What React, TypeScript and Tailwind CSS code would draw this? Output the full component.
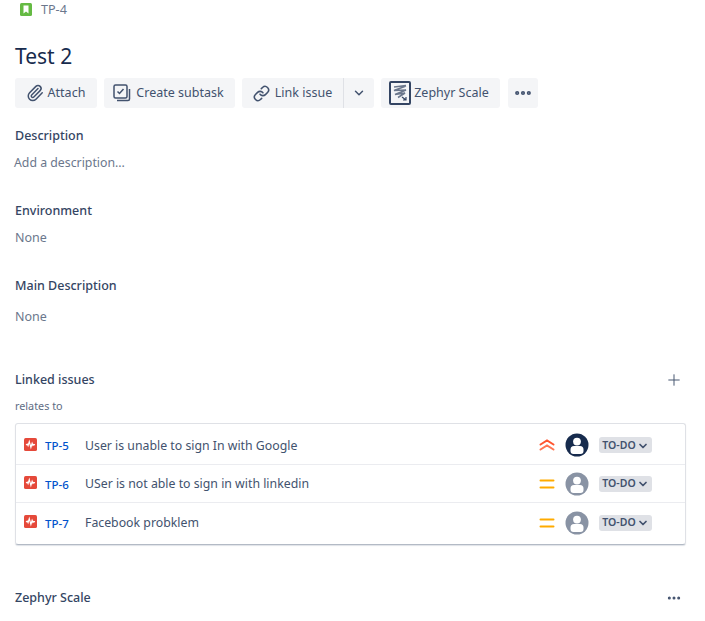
import { Paperclip, Link, ChevronDown, Ellipsis, Plus } from 'lucide-react';

const font = { fontFamily: '"Noto Sans", sans-serif' };

const Bug = () => (
  <svg width="13" height="13" viewBox="0 0 16 16" className="shrink-0 -mt-[2px]">
    <rect width="16" height="16" rx="2" fill="#e5493a" />
    <path d="M2.500 8.500l1.500-1 1 2 1.500-5 2 7 1.500-5 1 2.500 1-1 1.500.500" fill="none" stroke="#fff" strokeWidth="1.500" />
  </svg>
);

const Avatar = ({ color }: { color: string }) => (
  <svg width="24" height="24" viewBox="0 0 24 24" className="shrink-0">
    <circle cx="12" cy="12" r="11.500" fill={color} />
    <circle cx="12" cy="8.600" r="3.900" fill="#fff" />
    <path d="M5.500 16.500a3.500 3.500 0 0 1 3.500-3.500h6a3.500 3.500 0 0 1 3.500 3.500v1.500a3 3 0 0 1-3 3h-7a3 3 0 0 1-3-3z" fill="#fff" />
  </svg>
);

const High = () => (
  <svg width="16" height="14" viewBox="0 0 16 14" className="shrink-0">
    <path d="M1.500 6.500 8 2.500l6.500 4" fill="none" stroke="#ff5630" strokeWidth="2" strokeLinecap="round" />
    <path d="M1.500 11.500 8 7.500l6.500 4" fill="none" stroke="#ff7452" strokeWidth="2" strokeLinecap="round" />
  </svg>
);

const Medium = () => (
  <svg width="16" height="14" viewBox="0 0 16 14" className="shrink-0">
    <path d="M1.500 3.500h13M1.500 10.500h13" fill="none" stroke="#ffab00" strokeWidth="2" strokeLinecap="round" />
  </svg>
);

const Subtask = () => (
  <svg width="18" height="18" viewBox="0 0 18 18" fill="none" stroke="#42526e" className="shrink-0">
    <rect x="1" y="1" width="13" height="13" rx="1.500" strokeWidth="1.500" />
    <path d="m4.500 7.500 2 2 4-4.500" strokeWidth="1.500" />
    <path d="M4 16.500h11a1.500 1.500 0 0 0 1.500-1.500V5" strokeWidth="1.500" />
  </svg>
);

const Zephyr = () => (
  <svg width="22" height="24" viewBox="0 0 22 24" fill="none" className="shrink-0">
    <rect x="1" y="1" width="20" height="22" rx="1" stroke="#344563" strokeWidth="2" />
    <path d="M5 6 17 4.500M17 5 5 9.500l12-.500L6 13.500l10-1.500-7 4.500" stroke="#6b778c" strokeWidth="1.500" />
    <path d="m13 16 4 3m0-3v3h-3" stroke="#344563" strokeWidth="1.200" />
  </svg>
);

const issues = [
  { key: 'TP-5', title: 'User is unable to sign In with Google', priority: 'high', avatar: '#172b4d', h: 'h-[39px]' },
  { key: 'TP-6', title: 'USer is not able to sign in with linkedin', priority: 'medium', avatar: '#8993a4', h: 'h-[38px]' },
  { key: 'TP-7', title: 'Facebook probklem', priority: 'medium', avatar: '#8993a4', h: 'h-[39px]' },
];

const Label = ({ children, className }: { children: string; className: string }) => (
  <h3 className={`text-[12.500px] leading-[20px] font-medium text-[#344563] ${className}`}>{children}</h3>
);

export default function App() {
  return (
    <div style={font} className="w-[705px] h-[621px] overflow-hidden bg-white pl-[15px] pr-[19px] text-[#172b4d]">
      <div className="flex items-center h-[18px] pl-[5px] gap-[9px]">
        <svg width="12" height="13" viewBox="0 0 12 13" className="shrink-0">
          <rect width="12" height="13" rx="1.500" fill="#65ba43" />
          <path d="M3.500 2.500h5v8L6 8.500l-2.500 2z" fill="#fff" />
        </svg>
        <span className="text-[12.600px] text-[#6b778c] relative top-px">TP-4</span>
      </div>

      <h1 className="mt-[22px] text-[21px] leading-[32px] font-normal text-[#172b4d]">Test 2</h1>

      <div className="mt-[6px] flex gap-[7px] text-[12.500px] text-[#42526e]">
        <button className="h-[30px] w-[82px] pr-px rounded-[3px] bg-[#f4f5f7] flex items-center justify-center gap-[4px]">
          <Paperclip size={18} strokeWidth={2} color="#42526e" />
          Attach
        </button>
        <button className="h-[30px] w-[131px] pr-[2px] rounded-[3px] bg-[#f4f5f7] flex items-center justify-center gap-[5px]">
          <Subtask />
          Create subtask
        </button>
        <div className="h-[30px] w-[132px] rounded-[3px] bg-[#f4f5f7] flex items-center">
          <button className="h-full w-[102px] flex items-center justify-center gap-[5px] border-r border-[#dfe1e6]">
            <Link size={17} strokeWidth={2.200} color="#42526e" />
            Link issue
          </button>
          <button className="flex-1 flex items-center justify-center">
            <ChevronDown size={14} strokeWidth={2.500} color="#42526e" />
          </button>
        </div>
        <button className="h-[30px] w-[119px] pr-[3px] rounded-[3px] bg-[#f4f5f7] flex items-center justify-center gap-[3px]">
          <Zephyr />
          Zephyr Scale
        </button>
        <button className="ml-px h-[30px] w-[30px] rounded-[3px] bg-[#f4f5f7] flex items-center justify-center">
          <Ellipsis size={20} strokeWidth={3} color="#42526e" />
        </button>
      </div>

      <Label className="mt-[18px]">Description</Label>
      <p className="mt-[7px] -ml-px text-[12.300px] leading-[20px] text-[#6b778c]">Add a description...</p>

      <Label className="mt-[28px]">Environment</Label>
      <p className="mt-[7px] text-[12.500px] leading-[20px] text-[#6b778c]">None</p>

      <Label className="mt-[28px]">Main Description</Label>
      <p className="mt-[11px] text-[12.500px] leading-[20px] text-[#6b778c]">None</p>

      <div className="mt-[43px] flex items-center justify-between">
        <Label className="">Linked issues</Label>
        <Plus size={18} strokeWidth={1.300} color="#42526e" className="mr-[3px]" />
      </div>
      <p className="mt-[7px] text-[10.800px] leading-[18px] text-[#5e6c84]">relates to</p>

      <div className="mt-[8px] h-[122px] w-[671px] rounded-[3px] border border-[#dfe1e6] border-b-[#b3bac5] shadow-[0_1px_1px_rgba(9,30,66,0.13)] pt-[2px]">
        {issues.map((issue, i) => (
          <div key={issue.key} className={`${issue.h} flex items-center pl-[8px] ${i < 2 ? 'border-b border-[#ebecf0]' : ''}`}>
            <Bug />
            <span className="ml-[8px] w-[40px] pt-[2px] text-[11.500px] font-medium text-[#0052cc]">{issue.key}</span>
            <span className="pt-[2px] text-[12.300px] text-[#42526e]">{issue.title}</span>
            <div className="ml-auto flex items-center pr-[33px]">
              {issue.priority === 'high' ? <High /> : <Medium />}
              <div className="ml-[10px]"><Avatar color={issue.avatar} /></div>
              <span className="ml-[10px] h-[16px] w-[53px] pt-px rounded-[3px] bg-[#dfe1e6] flex items-center justify-center gap-[1px] text-[10.500px] font-semibold text-[#42526e]">
                TO-DO
                <ChevronDown size={12} strokeWidth={3.500} color="#42526e" />
              </span>
            </div>
          </div>
        ))}
      </div>

      <div className="mt-[43px] flex items-center justify-between">
        <Label className="">Zephyr Scale</Label>
        <Ellipsis size={16} strokeWidth={2.500} color="#42526e" className="mr-[4px]" />
      </div>
    </div>
  );
}
